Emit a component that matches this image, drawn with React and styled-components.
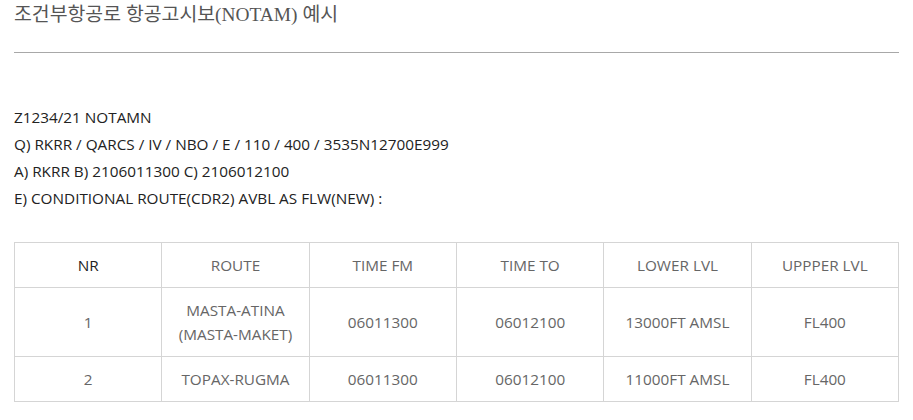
import React from "react";
import styled, { createGlobalStyle } from "styled-components";

const GlobalStyle = createGlobalStyle`
  body {
    margin: 0;
    background: #fff;
    font-family: "Open Sans", "Noto Sans CJK KR", sans-serif;
  }
`;

const Page = styled.div`
  padding: 0 14px;
`;

const Title = styled.h2`
  margin: 0;
  padding-bottom: 22px;
  border-bottom: 1px solid #a8a8a8;
  font-family: "Liberation Serif", "Noto Sans CJK KR", serif;
  font-weight: normal;
  font-size: 19.4px;
  line-height: 30px;
  color: #555;
`;

const Notam = styled.div`
  margin-top: 51px;
  font-size: 15.3px;
  line-height: 27px;
  color: #222;
`;

const Table = styled.table`
  margin-top: 30px;
  width: 100%;
  border-collapse: collapse;
  table-layout: fixed;
  font-size: 15.3px;
  line-height: 24px;
  color: #666;
`;

const Cell = styled.td`
  border: 1px solid #d5d5d5;
  padding: 10px;
  text-align: center;
  font-weight: normal;
  color: ${p => (p.$dark ? "#222" : "#666")};
`;

const headers = ["NR", "ROUTE", "TIME FM", "TIME TO", "LOWER LVL", "UPPPER LVL"];

const rows = [
  ["1", ["MASTA-ATINA", "(MASTA-MAKET)"], "06011300", "06012100", "13000FT AMSL", "FL400"],
  ["2", ["TOPAX-RUGMA"], "06011300", "06012100", "11000FT AMSL", "FL400"],
];

export default function App() {
  return (
    <Page>
      <GlobalStyle />
      <Title>조건부항공로 항공고시보(NOTAM) 예시</Title>
      <Notam>
        <div>Z1234/21 NOTAMN</div>
        <div>Q) RKRR / QARCS / IV / NBO / E / 110 / 400 / 3535N12700E999</div>
        <div>A) RKRR B) 2106011300 C) 2106012100</div>
        <div>E) CONDITIONAL ROUTE(CDR2) AVBL AS FLW(NEW) :</div>
      </Notam>
      <Table>
        <thead>
          <tr>
            {headers.map((h, i) => (
              <Cell as="th" key={h} $dark={i === 0}>
                {h}
              </Cell>
            ))}
          </tr>
        </thead>
        <tbody>
          {rows.map(row => (
            <tr key={row[0]}>
              {row.map((c, i) => (
                <Cell key={i}>
                  {Array.isArray(c)
                    ? c.map(line => <div key={line}>{line}</div>)
                    : c}
                </Cell>
              ))}
            </tr>
          ))}
        </tbody>
      </Table>
    </Page>
  );
}
